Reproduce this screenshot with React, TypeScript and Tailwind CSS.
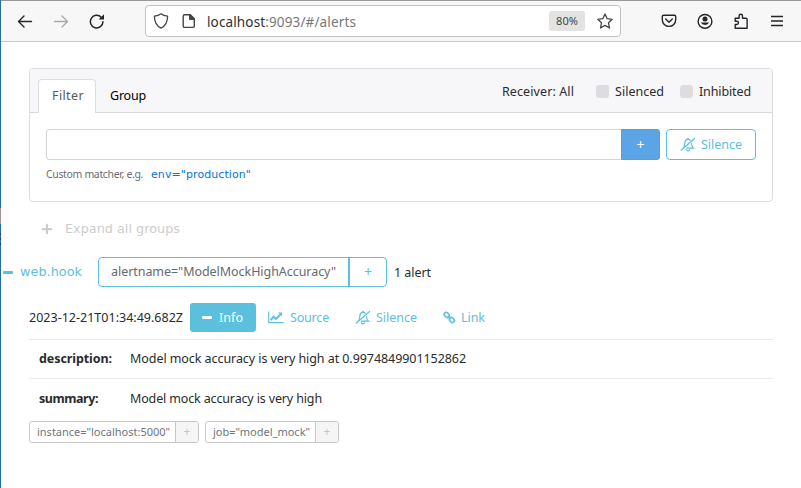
import React, { useLayoutEffect, useRef, useState } from "react";
import { FaPlus } from "react-icons/fa";

/* Label that tracks its letters so the text fills a given width. */
function Label({ w, className = "", children }: { w: number; className?: string; children: React.ReactNode }) {
  const ref = useRef<HTMLSpanElement>(null);
  const [tracking, setTracking] = useState(0);
  useLayoutEffect(() => {
    const el = ref.current;
    if (!el) return;
    const count = (el.textContent || "x").length;
    setTracking((w - el.getBoundingClientRect().width) / count);
  }, [w]);
  return (
    <span className="block shrink-0" style={{ width: w }}>
      <span ref={ref} className={`inline-block whitespace-nowrap ${className}`} style={{ letterSpacing: tracking }}>
        {children}
      </span>
    </span>
  );
}

function Minus() {
  return <span className="h-[3px] w-[10px] shrink-0 rounded-[1px] bg-current" />;
}

function BellSlash() {
  return (
    <svg className="h-[15px] w-[16px] shrink-0" viewBox="0 0 16 15" fill="none" stroke="currentColor">
      <path d="M3.2 11.2C4.7 9.7 4.8 8 4.9 6 5 3.8 6.300 2.400 8 2.400c1 0 1.900.4 2.500 1.100M11.500 6.200c.1 2.200.7 3.700 1.900 4.900H6" strokeWidth="1.200" />
      <path d="M8 .8v1.500" strokeWidth="1.400" />
      <path d="M6.400 12.300c.3 1.100.8 1.500 1.600 1.500s1.400-.5 1.600-1.400" strokeWidth="1.300" />
      <path d="M.8 13.500 14.800 1.200" strokeWidth="1.200" />
    </svg>
  );
}

function ChartIcon() {
  return (
    <svg className="h-[13px] w-[16px] shrink-0" viewBox="0 0 16 13" fill="none" stroke="currentColor">
      <path d="M.7.500v11.200h14.800" strokeWidth="1.200" />
      <path d="m2.600 9 3.200-3.300 2.300 2.200 4-4.200" strokeWidth="2" />
      <path d="M10 1.600h4v4z" fill="currentColor" stroke="none" />
    </svg>
  );
}

function ChainIcon() {
  return (
    <svg className="h-[13px] w-[13px] shrink-0" viewBox="0 0 13 13" fill="none" stroke="currentColor" strokeWidth="1.600">
      <rect x="-2.700" y="-2" width="5.400" height="4" rx="1.900" transform="translate(3.700 3.900) rotate(45)" />
      <rect x="-2.700" y="-2" width="5.400" height="4" rx="1.900" transform="translate(8.900 9) rotate(45)" />
      <path d="m5 5.200 2.800 2.700" />
    </svg>
  );
}

function Toolbar() {
  return (
    <header className="flex h-[42px] items-center border-t border-b border-t-[#98979b] border-b-[#c8c8c9] bg-[#f7f7f7] pl-[16px] text-[#252529]">
      <svg className="mr-[20px] h-4 w-4" viewBox="0 0 16 16" fill="none" stroke="currentColor" strokeWidth="1.400" strokeLinecap="round" strokeLinejoin="round">
        <path d="M14.500 8.500H1.500M7 3 1.500 8.500 7 14" />
      </svg>
      <svg className="mr-[20px] h-4 w-4 text-[#aaaaad]" viewBox="0 0 16 16" fill="none" stroke="currentColor" strokeWidth="1.400" strokeLinecap="round" strokeLinejoin="round">
        <path d="M1.500 8.500h13M9 3l5.500 5.500L9 14" />
      </svg>
      <svg className="mr-[40px] h-4 w-4" viewBox="0 0 16 16" fill="none" stroke="currentColor" strokeWidth="1.500" strokeLinecap="round">
        <path d="M14 8.800A6.300 6.300 0 1 1 12.200 4.200" />
        <path d="M15 1.300v5.300H9.700z" fill="currentColor" stroke="none" />
      </svg>
      <div className="flex h-8 w-[476px] shrink-0 items-center rounded-[4px] border border-[#c2c2c4] bg-white pl-[7px] text-[#454549]">
        <svg className="mr-[12px] h-4 w-4" viewBox="0 0 16 16" fill="none" stroke="currentColor" strokeWidth="1.300" strokeLinejoin="round">
          <path d="M8 .8C6.300 2.200 4 2.900 1.400 3.100c0 5.400 1.800 9.800 6.600 12.100 4.800-2.300 6.600-6.700 6.600-12.100C12 2.900 9.700 2.200 8 .8Z" />
        </svg>
        <svg className="mr-[10px] h-4 w-4" viewBox="0 0 16 16" fill="none" stroke="currentColor" strokeWidth="1.400" strokeLinejoin="round">
          <path d="M3.700 1.700h5.600l4 4v7.200c0 .9-.6 1.500-1.500 1.500H3.700c-.9 0-1.500-.6-1.500-1.500V3.200c0-.9.6-1.500 1.500-1.500Z" />
          <path d="M8.700 1.700v4.600h4.600z" fill="currentColor" />
        </svg>
        <Label w={149} className="relative top-[1px] text-[13.500px] text-[#77777a]">
          <span className="text-[#303034]">localhost</span>:9093/#/alerts
        </Label>
        <div className="ml-[193px] flex h-5 w-9 items-center justify-center rounded-[3px] bg-[#e3e3e3]">
          <Label w={22} className="text-[11px]">80%</Label>
        </div>
        <svg className="ml-[12px] h-4 w-4" viewBox="0 0 16 16" fill="none" stroke="currentColor" strokeWidth="1.300" strokeLinejoin="round">
          <path d="m8 .9 2.200 4.800 5 .6-3.700 3.500 1 5.200L8 12.400 3.500 15l1-5.200L.8 6.300l5-.6z" />
        </svg>
      </div>
      <svg className="ml-[40px] h-4 w-4" viewBox="0 0 16 16" fill="none" stroke="currentColor" strokeWidth="1.400" strokeLinecap="round" strokeLinejoin="round">
        <path d="M2.600 2.200h10.800c.8 0 1.300.5 1.300 1.300v3.200a6.700 6.700 0 0 1-13.400 0V3.500c0-.8.500-1.300 1.300-1.300Z" />
        <path d="M4.700 6 8 9.200 11.300 6" />
      </svg>
      <svg className="ml-[20px] h-4 w-4" viewBox="0 0 16 16" fill="none" stroke="currentColor" strokeWidth="1.400">
        <circle cx="8" cy="8.400" r="6.900" />
        <circle cx="8" cy="6" r="2.500" fill="currentColor" stroke="none" />
        <path d="M3.900 9.500h8.200a4.300 3.500 0 0 1-8.200 0Z" fill="currentColor" stroke="none" />
      </svg>
      <svg className="ml-[20px] h-4 w-4" viewBox="0 0 16 16" fill="none" stroke="currentColor" strokeWidth="1.400" strokeLinejoin="round">
        <path d="M2.200 15.300V11.500h1.600a1.600 1.600 0 0 0 0-3.300H2.200V5.300h3.900V3a1.700 1.700 0 0 1 3.400 0v2.300h3.600c.7 0 1 .3 1 1v9H2.200Z" />
      </svg>
      <svg className="ml-[20px] h-4 w-4" viewBox="0 0 16 16" stroke="currentColor" strokeWidth="1.300">
        <path d="M2 3.500h12M2 8h12M2 12.500h12" />
      </svg>
    </header>
  );
}

function Check({ w, children }: { w: number; children: string }) {
  return (
    <div className="flex items-center gap-[6px]">
      <span className="h-[13px] w-[13px] rounded-[3px] bg-[#dddddd]" />
      <Label w={w} className="relative top-[1px]">{children}</Label>
    </div>
  );
}

function FilterCard() {
  return (
    <section className="h-[134px] w-[744px] rounded-[4px] border border-[#dddddf]">
      <div className="flex h-[44px] rounded-t-[3px] border-b border-[#d8d8da] bg-[#f7f7f9] pl-[8px]">
        <div className="mt-[10px] h-[34px] w-[58px] rounded-t-[4px] border border-b-0 border-[#dddddf] bg-white pt-[7px] pl-[13px] text-[#55595c]">
          <Label w={32}>Filter</Label>
        </div>
        <div className="mt-[18px] ml-[14px] text-black">
          <Label w={36}>Group</Label>
        </div>
        <div className="ml-[356px] flex h-[44px] items-center gap-[22px]">
          <Label w={72} className="relative top-[1px]">Receiver: All</Label>
          <div className="flex gap-[16px]">
            <Check w={49}>Silenced</Check>
            <Check w={52}>Inhibited</Check>
          </div>
        </div>
      </div>
      <div className="mt-[16px] ml-[16px] flex">
        <div className="h-[31px] w-[575px] rounded-l-[4px] border border-r-0 border-[#d6d6d8]" />
        <div className="flex h-[31px] w-[39px] items-center justify-center rounded-r-[3px] border border-[#529fe2] bg-[#5ba5e6] text-[14px] text-white">+</div>
        <div className="ml-[6px] flex h-[31px] w-[90px] items-center rounded-[4px] border border-[#5bc0de] pl-[13px] text-[#5bc0de]">
          <BellSlash />
          <span className="w-[5px]" />
          <Label w={41}>Silence</Label>
        </div>
      </div>
      <div className="mt-[6px] ml-[16px] flex h-4 items-center gap-[8px]">
        <Label w={97} className="text-[10.500px] text-[#696e72]">Custom matcher, e.g.</Label>
        <Label w={100} className="font-['DejaVu_Sans',sans-serif] text-[11px] text-[#0275d8]">env="production"</Label>
      </div>
    </section>
  );
}

function Tag({ w, box, children }: { w: number; box: string; children: string }) {
  return (
    <div className="flex h-[22px] overflow-hidden rounded-[3px] border border-[#c7c7c9] text-[11px] text-[#6e767c]">
      <div className={`flex items-center pl-[7px] ${box}`}>
        <Label w={w}>{children}</Label>
      </div>
      <div className="flex w-[23px] items-center justify-center border-l border-[#c7c7c9] bg-[#f5f5f5] text-[12px] text-[#c6c6c8]">+</div>
    </div>
  );
}

export default function App() {
  return (
    <div className="flex h-[488px] w-[801px] overflow-hidden bg-white font-['Noto_Sans',sans-serif] text-[12.500px] leading-[18px] text-[#292b2c]">
      <div className="flex w-px shrink-0 flex-col bg-[#276e9e]">
        <span className="mt-[208px] h-[16px] bg-[#9b9699]" />
        <span className="mt-[9px] h-[2px] bg-[#2b3d70]" />
        <span className="mt-[3px] h-[2px] bg-[#2b3d70]" />
        <span className="mt-[3px] h-[2px] bg-[#2b3d70]" />
      </div>
      <div className="w-[800px] shrink-0">
        <Toolbar />
        <main className="h-[446px] bg-[linear-gradient(to_right,#fbf7f7,white_9px)] pt-[26px]">
          <div className="ml-[28px]">
            <FilterCard />
          </div>
          <div className="mt-[18px] ml-[40px] flex h-[18px] items-center font-['DejaVu_Sans',sans-serif] text-[#cdcdcf]">
            <FaPlus className="mr-[12px] size-[12px]" />
            <Label w={115} className="text-[12.800px]">Expand all groups</Label>
          </div>
          <div className="mt-[19px] ml-[2px] flex h-[30px] items-center text-[#5bc0de]">
            <Minus />
            <span className="w-[7px]" />
            <Label w={62} className="font-['DejaVu_Sans',sans-serif] text-[12.800px]">web.hook</Label>
            <div className="ml-[16px] flex h-[30px] w-[289px] rounded-[4px] border border-[#5bc0de]">
              <div className="flex w-[251px] items-center border-r-2 border-[#5bc0de] pl-[12px] text-[#656a6e]">
                <Label w={225}>alertname="ModelMockHighAccuracy"</Label>
              </div>
              <div className="flex flex-1 items-center justify-center text-[14px]">+</div>
            </div>
            <Label w={37} className="relative top-[1px] ml-[7px] text-[#292b2c]">1 alert</Label>
          </div>
          <div className="mt-[16px] ml-[28px] flex h-[29px] items-center text-[#5bc0de]">
            <Label w={154} className="text-[#292b2c]">2023-12-21T01:34:49.682Z</Label>
            <div className="ml-[7px] flex h-[29px] w-[66px] items-center gap-[7px] rounded-[3px] bg-[#5bc0de] pl-[12px] text-white">
              <Minus />
              <Label w={24}>Info</Label>
            </div>
            <div className="ml-[12px] flex items-center gap-[6px]">
              <ChartIcon />
              <Label w={39}>Source</Label>
            </div>
            <div className="ml-[26px] flex items-center gap-[5px]">
              <BellSlash />
              <Label w={41}>Silence</Label>
            </div>
            <div className="ml-[26px] flex items-center gap-[5px]">
              <ChainIcon />
              <Label w={24}>Link</Label>
            </div>
          </div>
          <div className="mt-[7px] ml-[28px] w-[744px]">
            <div className="flex h-[39px] items-center gap-[18px] border-t border-[#e9eaec] pl-[10px]">
              <Label w={73} className="font-bold">description:</Label>
              <Label w={336}>Model mock accuracy is very high at 0.9974849901152862</Label>
            </div>
            <div className="flex h-[40px] items-center gap-[32px] border-t border-[#e9eaec] pl-[10px]">
              <Label w={59} className="font-bold">summary:</Label>
              <Label w={192}>Model mock accuracy is very high</Label>
            </div>
          </div>
          <div className="mt-[3px] ml-[28px] flex gap-[6px]">
            <Tag w={133} box="w-[145px]">instance="localhost:5000"</Tag>
            <Tag w={97} box="w-[109px]">job="model_mock"</Tag>
          </div>
        </main>
      </div>
    </div>
  );
}
